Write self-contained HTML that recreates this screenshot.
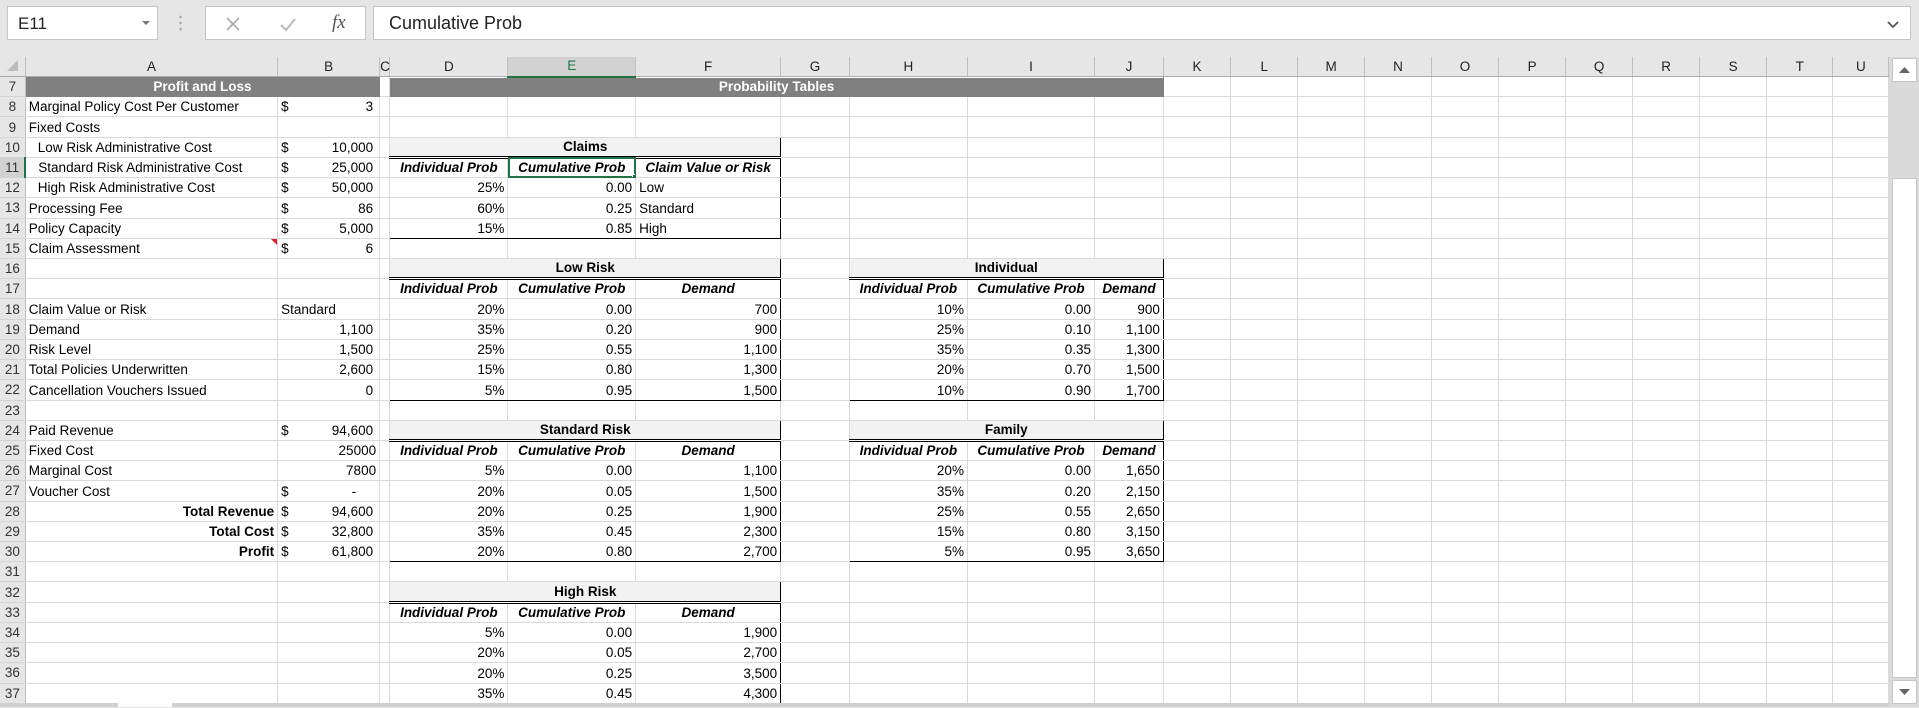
<!DOCTYPE html>
<html><head><meta charset="utf-8"><style>
*{box-sizing:border-box;margin:0;padding:0}
body{width:1919px;height:707px;overflow:hidden;background:#e6e6e6;font-family:"Liberation Sans",sans-serif;position:relative}
.box{position:absolute;background:#fff;border:1px solid #c6c6c6}
#grid{position:absolute;left:0;top:57px;width:1889px;height:647px;overflow:hidden;background:#fff}
table{border-collapse:collapse;table-layout:fixed;width:1889px;font-size:13.5px;color:#000}
tr{height:20.23px}
tr.h{height:19px}
td{border:1px solid #d9d9d9;padding:0 3px 2px 3px;white-space:nowrap;overflow:hidden;vertical-align:bottom;line-height:15px}
th{background:#e6e6e6;border-right:1px solid #c0c0c0;border-bottom:1px solid #ababab;font-weight:normal;font-size:13.5px;color:#222;vertical-align:middle;line-height:14px}
td.n{background:#e6e6e6;border:none;border-right:1px solid #c0c0c0;border-bottom:1px solid #d4d4d4;color:#333;text-align:center;padding:0;font-size:13.5px;vertical-align:middle}
td.n.sel{background:#d2d2d2;border-right:2px solid #217346}
th.sel{background:#d2d2d2;border-bottom:2px solid #217346}
.r{text-align:right}.c{text-align:center}.b{font-weight:bold}
.bi{font-weight:bold;font-style:italic;text-align:center}
.g{background:#808080;color:#fff;font-weight:bold;text-align:center;border-color:#808080}
.t{background:#f2f2f2;border:1px solid #000;border-bottom:3px double #000;font-weight:bold;text-align:center}
.bl{border-left:1px solid #000}.br{border-right:1px solid #000}.bb{border-bottom:1px solid #000}
.in{padding-left:12px}
.acc span{float:right;padding-right:3px}
.pr{padding-right:6px}
</style></head><body>
<div class="box" style="left:7px;top:6px;width:151px;height:34px"><span style="position:absolute;left:10px;top:7px;font-size:17px;color:#222">E11</span><span style="position:absolute;left:134px;top:14px;border:4px solid transparent;border-top:4px solid #777"></span></div>
<div style="position:absolute;left:179px;top:14px;width:3px;height:18px;background:radial-gradient(circle,#aaa 1.2px,transparent 1.5px) 0 0/3px 6px"></div>
<div class="box" style="left:205px;top:6px;width:161px;height:34px">
<svg width="161" height="34" style="position:absolute;left:0;top:0"><path d="M21 11l12 12M33 11L21 23" stroke="#aaa" stroke-width="1.6" fill="none"/><path d="M75 18l5 5 9-11" stroke="#bbb" stroke-width="2" fill="none"/></svg>
<span style="position:absolute;left:126px;top:5px;font-family:'Liberation Serif',serif;font-style:italic;font-size:19px;color:#555">fx</span></div>
<div class="box" style="left:373px;top:6px;width:1538px;height:34px"><span style="position:absolute;left:15px;top:6px;font-size:18px;color:#222">Cumulative Prob</span>
<svg width="14" height="10" style="position:absolute;right:10px;top:13px"><path d="M2 2l5 5 5-5" stroke="#555" stroke-width="1.8" fill="none"/></svg></div>
<div id="grid"><table>
<colgroup><col style="width:25.3px"><col style="width:252.3px"><col style="width:102px"><col style="width:10.2px"><col style="width:118.1px"><col style="width:127.8px"><col style="width:145px"><col style="width:68.6px"><col style="width:118.2px"><col style="width:127.1px"><col style="width:68.8px"><col style="width:67.4px"><col style="width:67px"><col style="width:66.8px"><col style="width:66.9px"><col style="width:67.2px"><col style="width:67px"><col style="width:67px"><col style="width:67px"><col style="width:67px"><col style="width:66.3px"><col style="width:56px"></colgroup>
<tr class="h"><th><svg width="20" height="16"><path d="M16 3v11H5z" fill="#bcbcbc"/></svg></th><th>A</th><th>B</th><th>C</th><th>D</th><th class="sel" style="color:#217346">E</th><th>F</th><th>G</th><th>H</th><th>I</th><th>J</th><th>K</th><th>L</th><th>M</th><th>N</th><th>O</th><th>P</th><th>Q</th><th>R</th><th>S</th><th>T</th><th>U</th></tr>
<tr><td class="n">7</td><td class="g" colspan="2">Profit and Loss</td><td></td><td class="g" colspan="7">Probability Tables</td><td></td><td></td><td></td><td></td><td></td><td></td><td></td><td></td><td></td><td></td><td></td></tr>
<tr><td class="n">8</td><td>Marginal Policy Cost Per Customer</td><td class="acc">$<span>3</span></td><td></td><td></td><td></td><td></td><td></td><td></td><td></td><td></td><td></td><td></td><td></td><td></td><td></td><td></td><td></td><td></td><td></td><td></td><td></td></tr>
<tr><td class="n">9</td><td>Fixed Costs</td><td></td><td></td><td></td><td></td><td></td><td></td><td></td><td></td><td></td><td></td><td></td><td></td><td></td><td></td><td></td><td></td><td></td><td></td><td></td><td></td></tr>
<tr><td class="n">10</td><td class="in">Low Risk Administrative Cost</td><td class="acc">$<span>10,000</span></td><td></td><td class="t" colspan="3">Claims</td><td></td><td></td><td></td><td></td><td></td><td></td><td></td><td></td><td></td><td></td><td></td><td></td><td></td><td></td><td></td></tr>
<tr><td class="n sel">11</td><td class="in">Standard Risk Administrative Cost</td><td class="acc">$<span>25,000</span></td><td></td><td class="bi bl">Individual Prob</td><td class="bi" style="outline:2px solid #217346;outline-offset:-2px;position:relative">Cumulative Prob<div style="position:absolute;right:-3px;bottom:-3px;width:6px;height:6px;background:#217346;border:1px solid #fff"></div></td><td class="bi br">Claim Value or Risk</td><td></td><td></td><td></td><td></td><td></td><td></td><td></td><td></td><td></td><td></td><td></td><td></td><td></td><td></td><td></td></tr>
<tr><td class="n">12</td><td class="in">High Risk Administrative Cost</td><td class="acc">$<span>50,000</span></td><td></td><td class="r bl">25%</td><td class="r">0.00</td><td class="br">Low</td><td></td><td></td><td></td><td></td><td></td><td></td><td></td><td></td><td></td><td></td><td></td><td></td><td></td><td></td><td></td></tr>
<tr><td class="n">13</td><td>Processing Fee</td><td class="acc">$<span>86</span></td><td></td><td class="r bl">60%</td><td class="r">0.25</td><td class="br">Standard</td><td></td><td></td><td></td><td></td><td></td><td></td><td></td><td></td><td></td><td></td><td></td><td></td><td></td><td></td><td></td></tr>
<tr><td class="n">14</td><td>Policy Capacity</td><td class="acc">$<span>5,000</span></td><td></td><td class="r bl bb">15%</td><td class="r bb">0.85</td><td class="br bb">High</td><td></td><td></td><td></td><td></td><td></td><td></td><td></td><td></td><td></td><td></td><td></td><td></td><td></td><td></td><td></td></tr>
<tr><td class="n">15</td><td style="position:relative">Claim Assessment<div style="position:absolute;right:0;top:0;border-top:6px solid #e02020;border-left:6px solid transparent"></div></td><td class="acc">$<span>6</span></td><td></td><td></td><td></td><td></td><td></td><td></td><td></td><td></td><td></td><td></td><td></td><td></td><td></td><td></td><td></td><td></td><td></td><td></td><td></td></tr>
<tr><td class="n">16</td><td></td><td></td><td></td><td class="t" colspan="3">Low Risk</td><td></td><td class="t" colspan="3">Individual</td><td></td><td></td><td></td><td></td><td></td><td></td><td></td><td></td><td></td><td></td><td></td></tr>
<tr><td class="n">17</td><td></td><td></td><td></td><td class="bi bl">Individual Prob</td><td class="bi">Cumulative Prob</td><td class="bi br">Demand</td><td></td><td class="bi bl">Individual Prob</td><td class="bi">Cumulative Prob</td><td class="bi br">Demand</td><td></td><td></td><td></td><td></td><td></td><td></td><td></td><td></td><td></td><td></td><td></td></tr>
<tr><td class="n">18</td><td>Claim Value or Risk</td><td>Standard</td><td></td><td class="r bl">20%</td><td class="r">0.00</td><td class="r br">700</td><td></td><td class="r bl">10%</td><td class="r">0.00</td><td class="r br">900</td><td></td><td></td><td></td><td></td><td></td><td></td><td></td><td></td><td></td><td></td><td></td></tr>
<tr><td class="n">19</td><td>Demand</td><td class="r pr">1,100</td><td></td><td class="r bl">35%</td><td class="r">0.20</td><td class="r br">900</td><td></td><td class="r bl">25%</td><td class="r">0.10</td><td class="r br">1,100</td><td></td><td></td><td></td><td></td><td></td><td></td><td></td><td></td><td></td><td></td><td></td></tr>
<tr><td class="n">20</td><td>Risk Level</td><td class="r pr">1,500</td><td></td><td class="r bl">25%</td><td class="r">0.55</td><td class="r br">1,100</td><td></td><td class="r bl">35%</td><td class="r">0.35</td><td class="r br">1,300</td><td></td><td></td><td></td><td></td><td></td><td></td><td></td><td></td><td></td><td></td><td></td></tr>
<tr><td class="n">21</td><td>Total Policies Underwritten</td><td class="r pr">2,600</td><td></td><td class="r bl">15%</td><td class="r">0.80</td><td class="r br">1,300</td><td></td><td class="r bl">20%</td><td class="r">0.70</td><td class="r br">1,500</td><td></td><td></td><td></td><td></td><td></td><td></td><td></td><td></td><td></td><td></td><td></td></tr>
<tr><td class="n">22</td><td>Cancellation Vouchers Issued</td><td class="r pr">0</td><td></td><td class="r bl bb">5%</td><td class="r bb">0.95</td><td class="r br bb">1,500</td><td></td><td class="r bl bb">10%</td><td class="r bb">0.90</td><td class="r br bb">1,700</td><td></td><td></td><td></td><td></td><td></td><td></td><td></td><td></td><td></td><td></td><td></td></tr>
<tr><td class="n">23</td><td></td><td></td><td></td><td></td><td></td><td></td><td></td><td></td><td></td><td></td><td></td><td></td><td></td><td></td><td></td><td></td><td></td><td></td><td></td><td></td><td></td></tr>
<tr><td class="n">24</td><td>Paid Revenue</td><td class="acc">$<span>94,600</span></td><td></td><td class="t" colspan="3">Standard Risk</td><td></td><td class="t" colspan="3">Family</td><td></td><td></td><td></td><td></td><td></td><td></td><td></td><td></td><td></td><td></td><td></td></tr>
<tr><td class="n">25</td><td>Fixed Cost</td><td class="r">25000</td><td></td><td class="bi bl">Individual Prob</td><td class="bi">Cumulative Prob</td><td class="bi br">Demand</td><td></td><td class="bi bl">Individual Prob</td><td class="bi">Cumulative Prob</td><td class="bi br">Demand</td><td></td><td></td><td></td><td></td><td></td><td></td><td></td><td></td><td></td><td></td><td></td></tr>
<tr><td class="n">26</td><td>Marginal Cost</td><td class="r">7800</td><td></td><td class="r bl">5%</td><td class="r">0.00</td><td class="r br">1,100</td><td></td><td class="r bl">20%</td><td class="r">0.00</td><td class="r br">1,650</td><td></td><td></td><td></td><td></td><td></td><td></td><td></td><td></td><td></td><td></td><td></td></tr>
<tr><td class="n">27</td><td>Voucher Cost</td><td class="acc">$<span style="padding-right:20px">-</span></td><td></td><td class="r bl">20%</td><td class="r">0.05</td><td class="r br">1,500</td><td></td><td class="r bl">35%</td><td class="r">0.20</td><td class="r br">2,150</td><td></td><td></td><td></td><td></td><td></td><td></td><td></td><td></td><td></td><td></td><td></td></tr>
<tr><td class="n">28</td><td class="r b">Total Revenue</td><td class="acc">$<span>94,600</span></td><td></td><td class="r bl">20%</td><td class="r">0.25</td><td class="r br">1,900</td><td></td><td class="r bl">25%</td><td class="r">0.55</td><td class="r br">2,650</td><td></td><td></td><td></td><td></td><td></td><td></td><td></td><td></td><td></td><td></td><td></td></tr>
<tr><td class="n">29</td><td class="r b">Total Cost</td><td class="acc">$<span>32,800</span></td><td></td><td class="r bl">35%</td><td class="r">0.45</td><td class="r br">2,300</td><td></td><td class="r bl">15%</td><td class="r">0.80</td><td class="r br">3,150</td><td></td><td></td><td></td><td></td><td></td><td></td><td></td><td></td><td></td><td></td><td></td></tr>
<tr><td class="n">30</td><td class="r b">Profit</td><td class="acc">$<span>61,800</span></td><td></td><td class="r bl bb">20%</td><td class="r bb">0.80</td><td class="r br bb">2,700</td><td></td><td class="r bl bb">5%</td><td class="r bb">0.95</td><td class="r br bb">3,650</td><td></td><td></td><td></td><td></td><td></td><td></td><td></td><td></td><td></td><td></td><td></td></tr>
<tr><td class="n">31</td><td></td><td></td><td></td><td></td><td></td><td></td><td></td><td></td><td></td><td></td><td></td><td></td><td></td><td></td><td></td><td></td><td></td><td></td><td></td><td></td><td></td></tr>
<tr><td class="n">32</td><td></td><td></td><td></td><td class="t" colspan="3">High Risk</td><td></td><td></td><td></td><td></td><td></td><td></td><td></td><td></td><td></td><td></td><td></td><td></td><td></td><td></td><td></td></tr>
<tr><td class="n">33</td><td></td><td></td><td></td><td class="bi bl">Individual Prob</td><td class="bi">Cumulative Prob</td><td class="bi br">Demand</td><td></td><td></td><td></td><td></td><td></td><td></td><td></td><td></td><td></td><td></td><td></td><td></td><td></td><td></td><td></td></tr>
<tr><td class="n">34</td><td></td><td></td><td></td><td class="r bl">5%</td><td class="r">0.00</td><td class="r br">1,900</td><td></td><td></td><td></td><td></td><td></td><td></td><td></td><td></td><td></td><td></td><td></td><td></td><td></td><td></td><td></td></tr>
<tr><td class="n">35</td><td></td><td></td><td></td><td class="r bl">20%</td><td class="r">0.05</td><td class="r br">2,700</td><td></td><td></td><td></td><td></td><td></td><td></td><td></td><td></td><td></td><td></td><td></td><td></td><td></td><td></td><td></td></tr>
<tr><td class="n">36</td><td></td><td></td><td></td><td class="r bl">20%</td><td class="r">0.25</td><td class="r br">3,500</td><td></td><td></td><td></td><td></td><td></td><td></td><td></td><td></td><td></td><td></td><td></td><td></td><td></td><td></td><td></td></tr>
<tr><td class="n">37</td><td></td><td></td><td></td><td class="r bl">35%</td><td class="r">0.45</td><td class="r br">4,300</td><td></td><td></td><td></td><td></td><td></td><td></td><td></td><td></td><td></td><td></td><td></td><td></td><td></td><td></td><td></td></tr>
</table></div>
<div style="position:absolute;left:1889px;top:57px;width:30px;height:650px;background:#dadada"></div>
<div style="position:absolute;left:1892px;top:58px;width:25px;height:24px;background:#fff;border:1px solid #c6c6c6"><svg width="23" height="22"><path d="M6 14l5.5-6 5.5 6z" fill="#666"/></svg></div>
<div style="position:absolute;left:1892px;top:178px;width:25px;height:500px;background:#fff;border:1px solid #c6c6c6"></div>
<div style="position:absolute;left:1892px;top:680px;width:25px;height:24px;background:#fff;border:1px solid #c6c6c6"><svg width="23" height="22"><path d="M6 8l5.5 6 5.5-6z" fill="#666"/></svg></div>
<div style="position:absolute;left:0;top:703px;width:1889px;height:4px;background:#d0d0d0"></div>
<div style="position:absolute;left:118px;top:703px;width:54px;height:4px;background:#fff"></div>
</body></html>
